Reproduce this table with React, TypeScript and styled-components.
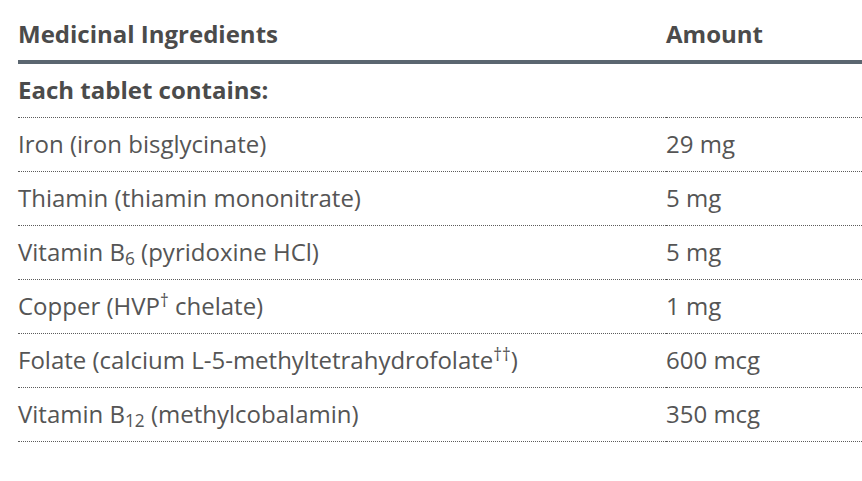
import React from "react";
import styled, { createGlobalStyle } from "styled-components";

const Global = createGlobalStyle`
  html, body { margin: 0; padding: 0; background: #ffffff; overflow: hidden; }
  body { font-family: "Open Sans", "Liberation Sans", sans-serif; }
`;

const Table = styled.table`
  margin-left: 18px;
  width: calc(100vw - 18px);
  border-collapse: separate;
  border-spacing: 0;
  font-size: 24px;
  line-height: 36px;
  color: #555555;
`;

const HeadCell = styled.th<{ $wide?: boolean }>`
  text-align: left;
  font-weight: 700;
  color: #4b4b4b;
  padding: 16px 0 8px;
  border-bottom: 4px solid #5b6670;
  width: ${(p) => (p.$wide ? "648px" : "auto")};
`;

const Cell = styled.td<{ $strong?: boolean }>`
  padding: 8px 0 9px;
  border-bottom: 1px dotted #5c5c5c;
  font-weight: ${(p) => (p.$strong ? 700 : 400)};
  color: ${(p) => (p.$strong ? "#4b4b4b" : "#555555")};
  white-space: nowrap;
`;

const Sub = styled.sub`
  font-size: 0.72em;
  line-height: 0;
  vertical-align: -0.25em;
`;

const Sup = styled.sup`
  font-size: 0.72em;
  line-height: 0;
  vertical-align: 0.45em;
`;

type Row = { name: React.ReactNode; amount: string };

const rows: Row[] = [
  { name: "Iron (iron bisglycinate)", amount: "29 mg" },
  { name: "Thiamin (thiamin mononitrate)", amount: "5 mg" },
  {
    name: (
      <>
        Vitamin B<Sub>6</Sub> (pyridoxine HCl)
      </>
    ),
    amount: "5 mg",
  },
  {
    name: (
      <>
        Copper (HVP<Sup>†</Sup> chelate)
      </>
    ),
    amount: "1 mg",
  },
  {
    name: (
      <>
        Folate (calcium L-5-methyltetrahydrofolate<Sup>††</Sup>)
      </>
    ),
    amount: "600 mcg",
  },
  {
    name: (
      <>
        Vitamin B<Sub>12</Sub> (methylcobalamin)
      </>
    ),
    amount: "350 mcg",
  },
];

export default function App() {
  return (
    <>
      <Global />
      <Table>
        <thead>
          <tr>
            <HeadCell $wide>Medicinal Ingredients</HeadCell>
            <HeadCell>Amount</HeadCell>
          </tr>
        </thead>
        <tbody>
          <tr>
            <Cell $strong>Each tablet contains:</Cell>
            <Cell></Cell>
          </tr>
          {rows.map((r, i) => (
            <tr key={i}>
              <Cell>{r.name}</Cell>
              <Cell>{r.amount}</Cell>
            </tr>
          ))}
        </tbody>
      </Table>
    </>
  );
}
